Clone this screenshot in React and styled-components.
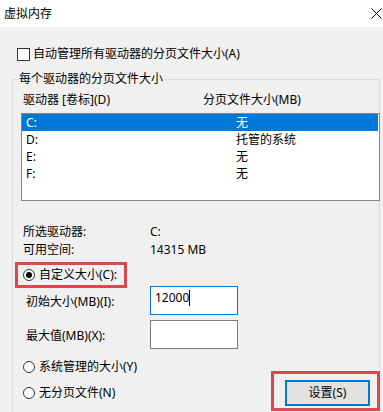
import React from 'react'
import styled, { createGlobalStyle, css } from 'styled-components'

const GlobalStyle = createGlobalStyle`
  html, body {
    margin: 0;
    padding: 0;
    background: #f0f0f0;
  }
  body {
    font-family: "Noto Sans", "Noto Sans CJK SC", sans-serif;
    font-size: 12px;
    color: #000;
  }
`

const Window = styled.div`
  width: 383px;
  height: 412px;
  overflow: hidden;
  background: #f0f0f0;
`

const TitleBar = styled.div`
  height: 27px;
  box-sizing: border-box;
  display: flex;
  align-items: center;
  justify-content: space-between;
  padding: 0 1px 0 4px;
  background: #fff;
  line-height: 16px;
`

const CheckRow = styled.label`
  display: flex;
  align-items: center;
  gap: 3px;
  height: 16px;
  line-height: 16px;
  margin: 19px 0 0 17px;
`

const CheckBox = styled.span`
  width: 13px;
  height: 13px;
  box-sizing: border-box;
  border: 1px solid #333;
  background: #fff;
`

const Group = styled.fieldset`
  margin: 9px 0 0 12px;
  padding: 0 8px 40px;
  width: 368px;
  min-width: 0;
  box-sizing: border-box;
  border: 1px solid #dcdcdc;
`

const Legend = styled.legend`
  margin-left: -4px;
  padding: 0 2px;
  line-height: 16px;
`

const Header = styled.div`
  display: grid;
  grid-template-columns: 180px 1fr;
  margin-top: 5px;
  padding-left: 2px;
  line-height: 16px;
`

const ListBox = styled.div`
  margin: 5px -9px 0 0;
  height: 88px;
  box-sizing: border-box;
  border: 1px solid #828790;
  background: #fff;
`

const ListRow = styled.div`
  display: grid;
  grid-template-columns: 210px 1fr;
  height: 17px;
  line-height: 17px;
  padding-left: 4px;
  margin-right: 1px;
  ${p =>
    p.$selected &&
    css`
      background: #0078d7;
      color: #fff;
    `}
`

const InfoRow = styled.div`
  display: grid;
  grid-template-columns: 127px 1fr;
  padding-left: 2px;
  line-height: 18px;
  &:first-of-type {
    margin-top: 22px;
  }
`

const Info = styled.div``

const RadioRow = styled.label`
  position: relative;
  display: flex;
  align-items: center;
  gap: 4px;
  height: 20px;
  padding-left: 2px;
  line-height: 16px;
  margin-top: ${p => p.$top || 0}px;
  ${p =>
    p.$highlight &&
    css`
      &::after {
        content: '';
        position: absolute;
        left: -6px;
        top: -3px;
        width: 112px;
        height: 26px;
        box-sizing: border-box;
        border: 3px solid #e0474c;
      }
    `}
`

const Radio = styled.span`
  width: 12px;
  height: 12px;
  box-sizing: border-box;
  border: 1px solid #333;
  border-radius: 50%;
  background: #fff;
  display: flex;
  align-items: center;
  justify-content: center;
  &::after {
    content: '';
    width: 6px;
    height: 6px;
    border-radius: 50%;
    background: ${p => (p.$checked ? '#000' : 'transparent')};
  }
`

const FieldRow = styled.div`
  display: grid;
  grid-template-columns: 124px 88px;
  align-items: center;
  padding-left: 5px;
  margin-top: ${p => p.$top || 0}px;
`

const FieldLabel = styled.span`
  padding-top: 3px;
  line-height: 16px;
`

const EditBox = styled.div`
  height: 29px;
  box-sizing: border-box;
  display: flex;
  align-items: flex-start;
  padding: 3px 4px 0;
  border: 1px solid ${p => (p.$focused ? '#0078d7' : '#7a7a7a')};
  background: #fff;
  line-height: 16px;
`

const Caret = styled.span`
  width: 1px;
  height: 16px;
  background: #000;
`

const Bottom = styled.div`
  display: flex;
  justify-content: space-between;
  align-items: flex-start;
  margin-top: 8px;
`

const RadioList = styled.div`
  display: flex;
  flex-direction: column;
  gap: 6px;
`

const ButtonWrap = styled.div`
  position: relative;
  margin: 23px 1px 0 0;
  &::after {
    content: '';
    position: absolute;
    left: -14px;
    top: -9px;
    width: 109px;
    height: 40px;
    box-sizing: border-box;
    border: 3px solid #e0474c;
    pointer-events: none;
  }
`

const Button = styled.button`
  width: 85px;
  height: 26px;
  box-sizing: border-box;
  border: 2px solid #0078d7;
  background: #e1e1e1;
  font: inherit;
  color: #000;
  padding: 0;
  line-height: 16px;
`

const CloseIcon = () => (
  <svg width="11" height="11" viewBox="0 0 11 11">
    <path d="M0.5 0.5 L10.5 10.5 M10.5 0.5 L0.5 10.5" stroke="#000" strokeWidth="1" fill="none" />
  </svg>
)

const drives = [
  { name: 'C:', size: '无', selected: true },
  { name: 'D:', size: '托管的系统' },
  { name: 'E:', size: '无' },
  { name: 'F:', size: '无' },
]

export default function App() {
  return (
    <Window>
      <GlobalStyle />
      <TitleBar>
        <span>虚拟内存</span>
        <CloseIcon />
      </TitleBar>

      <CheckRow>
        <CheckBox />
        自动管理所有驱动器的分页文件大小(A)
      </CheckRow>

      <Group>
        <Legend>每个驱动器的分页文件大小</Legend>
        <Header>
          <span>驱动器 [卷标](D)</span>
          <span>分页文件大小(MB)</span>
        </Header>
        <ListBox>
          {drives.map(d => (
            <ListRow key={d.name} $selected={d.selected}>
              <span>{d.name}</span>
              <span>{d.size}</span>
            </ListRow>
          ))}
        </ListBox>

        <Info>
          <InfoRow>
            <span>所选驱动器:</span>
            <span>C:</span>
          </InfoRow>
          <InfoRow>
            <span>可用空间:</span>
            <span>14315 MB</span>
          </InfoRow>
        </Info>

        <RadioRow $top={6} $highlight>
          <Radio $checked />
          自定义大小(C):
        </RadioRow>

        <FieldRow $top={1}>
          <FieldLabel>初始大小(MB)(I):</FieldLabel>
          <EditBox $focused>
            12000
            <Caret />
          </EditBox>
        </FieldRow>
        <FieldRow $top={5}>
          <FieldLabel>最大值(MB)(X):</FieldLabel>
          <EditBox />
        </FieldRow>

        <Bottom>
          <RadioList>
            <RadioRow>
              <Radio />
              系统管理的大小(Y)
            </RadioRow>
            <RadioRow>
              <Radio />
              无分页文件(N)
            </RadioRow>
          </RadioList>
          <ButtonWrap>
            <Button type="button">设置(S)</Button>
          </ButtonWrap>
        </Bottom>
      </Group>
    </Window>
  )
}
